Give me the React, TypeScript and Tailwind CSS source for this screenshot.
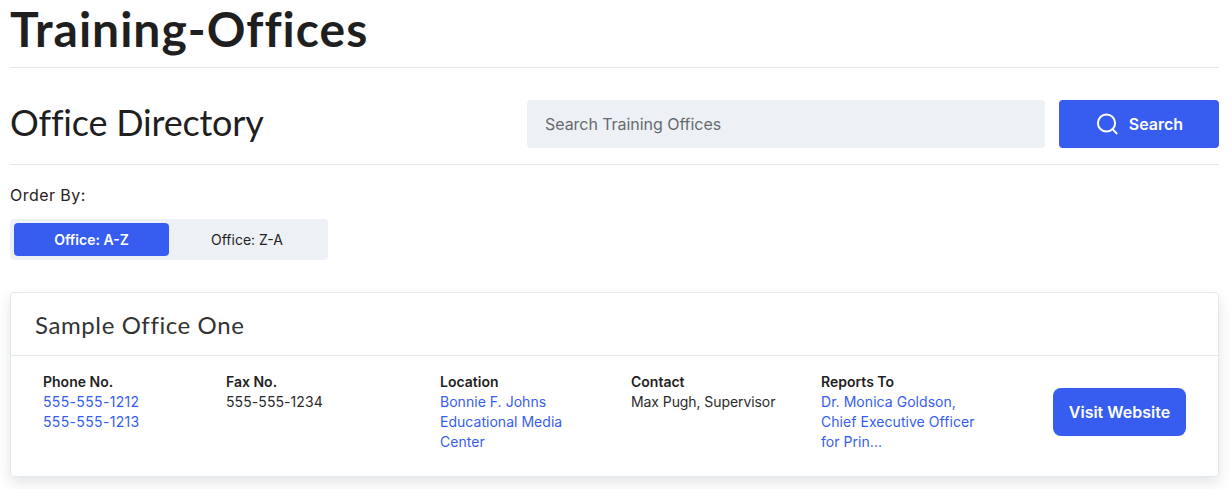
const HEADING = { fontFamily: 'Lato, sans-serif', fontVariantLigatures: 'none' };

const COLUMNS = [
  { label: 'Phone No.', width: 'w-[183px]', lines: ['555-555-1212', '555-555-1213'], text: 'tracking-[0.34px] text-[#365df0]' },
  { label: 'Fax No.', width: 'w-[214px]', lines: ['555-555-1234'], text: 'tracking-[0.08px] text-[#2b2b2b]' },
  { label: 'Location', width: 'w-[191px]', lines: ['Bonnie F. Johns', 'Educational Media', 'Center'], text: 'tracking-[0.03px] text-[#365df0]' },
  { label: 'Contact', width: 'w-[190px]', lines: ['Max Pugh, Supervisor'], text: 'tracking-[-0.08px] text-[#2b2b2b]' },
  { label: 'Reports To', width: 'w-[232px]', lines: ['Dr. Monica Goldson,', 'Chief Executive Officer', 'for Prin...'], text: 'tracking-[0.05px] text-[#365df0]' },
];

function SearchIcon() {
  return (
    <svg width="24" height="24" viewBox="0 0 24 24" fill="none" stroke="currentColor" strokeWidth="2" strokeLinecap="round">
      <circle cx="11.5" cy="11" r="8.6" />
      <path d="M18 17.6 21.6 21.4" />
    </svg>
  );
}

export default function App() {
  return (
    <div className="h-[489px] overflow-hidden bg-white pl-[10px] pr-[12px] text-[#1f1f1f] font-['Inter',sans-serif]">
      <h1 style={HEADING} className="h-[68px] border-b border-[#e2e8f0] text-[48px] leading-[58px] font-bold tracking-[1px]">
        Training-Offices
      </h1>

      <div className="flex h-[97px] items-start justify-between border-b border-[#e2e8f0] pt-8">
        <h2 style={HEADING} className="text-[36px] leading-[44px] font-normal tracking-[-0.2px]">
          Office Directory
        </h2>
        <div className="flex gap-[14px]">
          <input
            placeholder="Search Training Offices"
            className="h-12 w-[518px] rounded bg-[#edf1f5] px-[18px] text-base tracking-[-0.05px] placeholder:text-[#666b70] outline-none"
          />
          <button className="flex h-12 w-40 items-center justify-center gap-[10px] rounded bg-[#365df0] text-base font-semibold text-white">
            <SearchIcon />
            Search
          </button>
        </div>
      </div>

      <p className="mt-[20px] text-base leading-5 tracking-[0.45px] text-[#2a2020]">Order By:</p>
      <div className="mt-[14px] flex h-[41px] w-[318px] gap-px rounded bg-[#edf1f5] p-1 text-sm">
        <button className="w-[155px] rounded bg-[#365df0] font-semibold text-white">Office: A-Z</button>
        <button className="flex-1 font-normal text-[#222]">Office: Z-A</button>
      </div>

      <div className="mt-8 h-[185px] rounded border border-[#e2e8f0] shadow-[0_6px_14px_rgba(30,41,59,0.12)]">
        <h3 style={HEADING} className="flex h-[63px] items-center border-b border-[#e2e8f0] px-6 pt-0.5 text-2xl font-normal tracking-[0.6px] text-[#333]">
          Sample Office One
        </h3>
        <div className="flex items-start pl-8 pt-4 text-sm leading-5">
          {COLUMNS.map((col) => (
            <div key={col.label} className={col.width}>
              <div className="font-semibold">{col.label}</div>
              {col.lines.map((line) => (
                <div key={line} className={col.text}>
                  {line}
                </div>
              ))}
            </div>
          ))}
          <button className="mt-4 h-12 w-[133px] rounded-lg bg-[#365df0] text-base font-semibold text-white">
            Visit Website
          </button>
        </div>
      </div>
    </div>
  );
}
